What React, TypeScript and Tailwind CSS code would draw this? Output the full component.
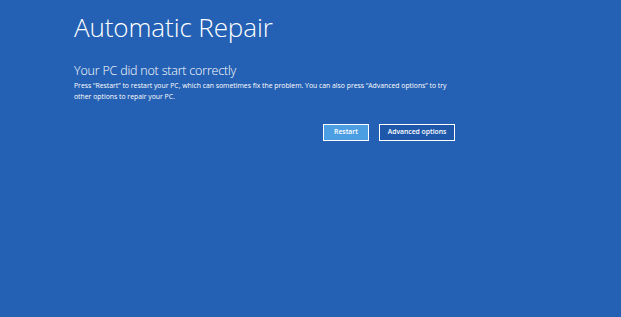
export default function App() {
  return (
    <div
      className="h-[317px] w-[621px] overflow-hidden bg-[#2461b4] text-white"
      style={{ fontFamily: '"Open Sans", "Noto Sans", sans-serif' }}
    >
      <div className="pl-[74px] pt-[9px]">
        {/* Title */}
        <h1 className="text-[26px] font-light leading-[36px] tracking-[-0.1px]">Automatic Repair</h1>

        {/* Message */}
        <h2 className="mt-[18px] text-[12.5px] font-light leading-[16px] tracking-[-0.2px]">Your PC did not start correctly</h2>
        <p className="mt-[1px] w-[390px] text-[6.85px] leading-[11px]">
          Press “Restart” to restart your PC, which can sometimes fix the problem. You can also press “Advanced options” to try
          <br />
          other options to repair your PC.
        </p>

        {/* Buttons */}
        <div className="ml-[249px] mt-[22px] flex gap-[10px]">
          <button className="h-[17px] w-[46px] border-[1.5px] border-white bg-[#4c9ee3] text-[6.8px] font-semibold leading-none">
            Restart
          </button>
          <button className="h-[17px] w-[76px] border-[1.5px] border-white bg-[#1f58aa] text-[6.8px] font-semibold leading-none">
            Advanced options
          </button>
        </div>
      </div>
    </div>
  )
}
